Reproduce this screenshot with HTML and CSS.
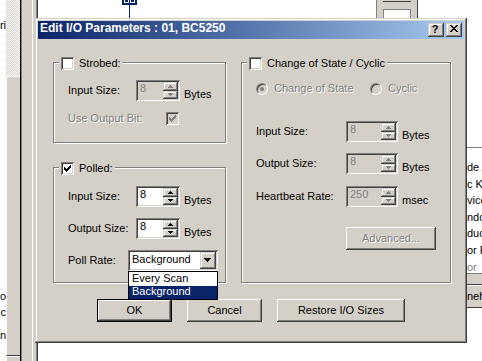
FILE: index.html
```html
<!DOCTYPE html>
<html>
<head>
<meta charset="utf-8">
<title>Edit I/O Parameters</title>
<link rel="stylesheet" href="styles.css">
</head>
<body>
<div class="desktop">
  <div class="left-win">
    <div class="lw-text">
      <div class="lw-line l1">ri</div>
      <div class="lw-line l2">o</div>
      <div class="lw-line l3">c</div>
      <div class="lw-line l4">n</div>
    </div>
    <div class="lw-pane">
      <div class="dither"></div>
      <div class="lw-panel"></div>
      <div class="lw-panel2"></div>
    </div>
    <div class="lw-bar"></div>
  </div>

  <div class="back-win">
    <div class="node"><span></span><span></span></div>
    <div class="link"></div>
    <div class="widget"><div class="w-top"></div><div class="w-box"></div></div>
  </div>

  <div class="right-pane">
    <div class="rp-list">
      <div>de A</div>
      <div>c K</div>
      <div>vice</div>
      <div>ndo</div>
      <div>duc</div>
      <div>or F</div>
      <div class="dim">or</div>
    </div>
    <div class="rp-band"></div>
    <div class="rp-btn">neh</div>
  </div>

  <div class="dialog">
    <div class="titlebar">
      <span class="title">Edit I/O Parameters : 01, BC5250</span>
      <div class="caption-btns">
        <div class="cbtn help">?</div>
        <div class="cbtn close">
          <svg width="8" height="7" viewBox="0 0 8 7" shape-rendering="crispEdges"><path fill="#000" d="M0 0h2v1H0zM6 0h2v1H6zM1 1h2v1H1zM5 1h2v1H5zM2 2h4v1H2zM3 3h2v1H3zM2 4h4v1H2zM1 5h2v1H1zM5 5h2v1H5zM0 6h2v1H0zM6 6h2v1H6z"/></svg>
        </div>
      </div>
    </div>

    <div class="dlg-body">
      <div class="columns">
        <div class="col-left">
          <div class="group g-strobed">
            <div class="legend"><span class="chk"></span><span>Strobed:</span></div>
            <div class="row">
              <span class="lbl w68">Input Size:</span>
              <div class="spin disabled">
                <span class="spin-val">8</span>
                <span class="spin-btns">
                  <span class="sb up"><i class="au"></i></span>
                  <span class="sb dn"><i class="ad"></i></span>
                </span>
              </div>
              <span class="unit">Bytes</span>
            </div>
            <div class="row r-outbit">
              <span class="lbl w98 dis">Use Output Bit:</span>
              <span class="chk disabled">
                <svg width="7" height="7" viewBox="0 0 7 7" shape-rendering="crispEdges"><path fill="currentColor" d="M6 0h1v3H6zM5 1h1v3H5zM4 2h1v3H4zM3 3h1v3H3zM2 4h1v3H2zM1 3h1v3H1zM0 2h1v3H0z"/></svg>
              </span>
            </div>
          </div>

          <div class="group g-polled">
            <div class="legend">
              <span class="chk">
                <svg width="7" height="7" viewBox="0 0 7 7" shape-rendering="crispEdges"><path fill="currentColor" d="M6 0h1v3H6zM5 1h1v3H5zM4 2h1v3H4zM3 3h1v3H3zM2 4h1v3H2zM1 3h1v3H1zM0 2h1v3H0z"/></svg>
              </span>
              <span>Polled:</span>
            </div>
            <div class="row">
              <span class="lbl w68">Input Size:</span>
              <div class="spin">
                <span class="spin-val">8</span>
                <span class="spin-btns">
                  <span class="sb up"><i class="au"></i></span>
                  <span class="sb dn"><i class="ad"></i></span>
                </span>
              </div>
              <span class="unit">Bytes</span>
            </div>
            <div class="row">
              <span class="lbl w68">Output Size:</span>
              <div class="spin">
                <span class="spin-val">8</span>
                <span class="spin-btns">
                  <span class="sb up"><i class="au"></i></span>
                  <span class="sb dn"><i class="ad"></i></span>
                </span>
              </div>
              <span class="unit">Bytes</span>
            </div>
            <div class="row">
              <span class="lbl w60">Poll Rate:</span>
              <div class="combo">
                <span class="combo-val">Background</span>
                <span class="combo-btn"><i class="ad7"></i></span>
                <div class="combo-list">
                  <div class="opt first">Every Scan</div>
                  <div class="opt sel">Background</div>
                </div>
              </div>
            </div>
          </div>
        </div>

        <div class="group g-cos">
          <div class="legend"><span class="chk"></span><span>Change of State / Cyclic</span></div>
          <div class="radio-row">
            <span class="ropt first"><span class="radio on"></span><span class="dis">Change of State</span></span>
            <span class="ropt"><span class="radio"></span><span class="dis">Cyclic</span></span>
          </div>
          <div class="row cos-first">
            <span class="lbl w90">Input Size:</span>
            <div class="spin wide disabled">
              <span class="spin-val">8</span>
              <span class="spin-btns">
                <span class="sb up"><i class="au"></i></span>
                <span class="sb dn"><i class="ad"></i></span>
              </span>
            </div>
            <span class="unit">Bytes</span>
          </div>
          <div class="row">
            <span class="lbl w90">Output Size:</span>
            <div class="spin wide disabled">
              <span class="spin-val">8</span>
              <span class="spin-btns">
                <span class="sb up"><i class="au"></i></span>
                <span class="sb dn"><i class="ad"></i></span>
              </span>
            </div>
            <span class="unit">Bytes</span>
          </div>
          <div class="row cos-hb">
            <span class="lbl w90">Heartbeat Rate:</span>
            <div class="spin wide disabled">
              <span class="spin-val">250</span>
              <span class="spin-btns">
                <span class="sb up"><i class="au"></i></span>
                <span class="sb dn"><i class="ad"></i></span>
              </span>
            </div>
            <span class="unit">msec</span>
          </div>
          <div class="btn btn-adv"><span class="dis">Advanced...</span></div>
        </div>
      </div>

      <div class="buttons">
        <div class="btn default b75">OK</div>
        <div class="btn b75">Cancel</div>
        <div class="btn b128">Restore I/O Sizes</div>
      </div>
    </div>
  </div>
</div>
</body>
</html>
```

FILE: styles.css
```css
* { box-sizing: border-box; margin: 0; padding: 0; }
html, body { width: 482px; height: 361px; overflow: hidden; background: #fff; }
body {
  font-family: "Liberation Sans", Arial, sans-serif;
  font-size: 11px;
  line-height: 13px;
  color: #000;
}

.desktop { position: relative; width: 482px; height: 361px; overflow: hidden; background: #fff; }

/* ---------- left background window ---------- */
.left-win { position: absolute; left: 0; top: 0; width: 36px; height: 361px; display: flex; }
.lw-text { width: 6px; background: #fff; display: flex; flex-direction: column; align-items: flex-end; overflow: hidden; }
.lw-line { white-space: nowrap; line-height: 13px; }
.l1 { margin-top: 19px; }
.l2 { margin-top: 258px; }
.l3 { margin-top: 3px; }
.l4 { margin-top: 10px; }
.lw-pane { width: 14px; display: flex; flex-direction: column; }
.dither { height: 76px; background: repeating-conic-gradient(#d4d0c8 0 25%, #fff 0 50%) 0 0 / 2px 2px; }
.lw-panel { height: 280px; background: #d4d0c8; border-top: 1px solid #fff; border-left: 1px solid #fff; border-bottom: 1px solid #404040; }
.lw-panel2 { flex: 1; background: #d4d0c8; border-top: 1px solid #fff; border-left: 1px solid #fff; }
.lw-bar { width: 16px; background: linear-gradient(to right, #000 0 1px, #808080 1px 2px, #d4d0c8 2px 12px, #fff 12px 13px, #d4d0c8 13px 16px); }

/* ---------- back window (canvas) ---------- */
.back-win { position: absolute; left: 36px; top: 0; right: 0; bottom: 0; background: #fff; box-shadow: inset 1px 0 #808080, inset 2px 0 #404040; }
.node { position: absolute; left: 86px; top: 0; width: 15px; height: 5px; background: #0a246a; display: flex; gap: 1px; padding-left: 2px; }
.node span { width: 5px; height: 3px; border: 1px solid #fff; border-top: none; }
.link { position: absolute; left: 93px; top: 5px; width: 1px; height: 13px; background: #0a246a; }
.widget { position: absolute; left: 340px; top: 0; width: 42px; height: 18px; background: #d4d0c8; border-left: 1px solid #808080; border-right: 1px solid #404040; }
.w-top { margin: 0 6px; height: 2px; border-bottom: 1px solid #404040; }
.w-box { margin: 7px 6px 0; height: 9px; background: #fff; border: 1px solid #808080; border-bottom: none; }

/* ---------- right background pane ---------- */
.right-pane { position: absolute; left: 467px; top: 147px; width: 15px; overflow: hidden; }
.rp-list { height: 126px; border-top: 1px solid #808080; padding-top: 11px; line-height: 16.6px; white-space: nowrap; background: #fff; }
.rp-list .dim { color: #808080; }
.rp-band { height: 12px; background: #d4d0c8; border-top: 1px solid #808080; border-bottom: 1px solid #404040; }
.rp-btn { height: 23px; background: #d4d0c8; border-top: 1px solid #fff; border-bottom: 1px solid #404040; line-height: 21px; white-space: nowrap; }

/* ---------- dialog ---------- */
.dialog {
  position: absolute; left: 35px; top: 18px; width: 432px; height: 325px;
  padding: 3px; background: #d4d0c8;
  box-shadow: inset -1px -1px #404040, inset 1px 1px #d4d0c8, inset -2px -2px #808080, inset 2px 2px #fff;
}
.titlebar { height: 18px; display: flex; align-items: flex-start; background: linear-gradient(to right, #0a246a, #a6caf0); }
.title { flex: 1; padding-left: 2px; color: #fff; font-weight: bold; font-size: 12px; line-height: 14px; white-space: nowrap; }
.caption-btns { display: flex; gap: 2px; margin: 2px 2px 0 0; }
.cbtn {
  width: 16px; height: 14px; background: #d4d0c8;
  box-shadow: inset -1px -1px #404040, inset 1px 1px #d4d0c8, inset -2px -2px #808080, inset 2px 2px #fff;
  display: flex; justify-content: center; align-items: flex-start;
}
.cbtn.help { font-weight: bold; font-size: 11px; line-height: 11px; padding-top: 1px; padding-right: 2px; }
.cbtn.close { padding-top: 2px; }
.cbtn svg { display: block; }

.dlg-body { padding-left: 15px; }
.columns { display: flex; gap: 15px; margin-top: 23px; }
.col-left { display: flex; flex-direction: column; gap: 24px; width: 173px; }

.group { position: relative; border: 1px solid #808080; box-shadow: inset 1px 1px #fff, 1px 1px #fff; }
.g-strobed { height: 81px; padding: 17px 0 0 14px; }
.g-polled { height: 116px; padding: 18px 0 0 14px; }
.g-cos { width: 210px; height: 221px; padding: 19px 0 0 14px; }
.legend {
  position: absolute; left: 5px; top: -6px; height: 13px;
  display: flex; align-items: center; gap: 5px; padding: 0 2px;
  background: #d4d0c8; white-space: nowrap;
}

.row { display: flex; align-items: center; height: 21px; }
.row + .row { margin-top: 11px; }
.r-outbit { margin-top: 7px; }
.row.r-outbit { margin-top: 7px; }
.cos-first { margin-top: 26px; }
.row.cos-hb { margin-top: 12px; }
.lbl { flex: none; white-space: nowrap; }
.w60 { width: 60px; }
.w68 { width: 68px; }
.w90 { width: 90px; }
.w98 { width: 98px; }
.unit { align-self: flex-end; margin-left: 4px; white-space: nowrap; }
.dis { color: #808080; text-shadow: 1px 1px 0 #fff; }

/* checkbox */
.chk {
  flex: none; width: 13px; height: 13px; background: #fff; color: #000;
  box-shadow: inset 1px 1px #808080, inset -1px -1px #fff, inset 2px 2px #404040, inset -2px -2px #d4d0c8;
  display: flex; align-items: center; justify-content: center;
}
.chk.disabled { background: #d4d0c8; color: #808080; }
.chk svg { display: block; }

/* radio */
.radio-row { display: flex; align-items: center; height: 13px; }
.ropt { display: flex; align-items: center; gap: 6px; white-space: nowrap; }
.ropt.first { width: 114px; }
.radio {
  flex: none; width: 12px; height: 12px; border-radius: 50%; background: #d4d0c8;
  border: 1px solid; border-color: #808080 #fff #fff #808080;
  box-shadow: inset 1px 1px #404040, inset -1px -1px #d4d0c8;
  display: flex; align-items: center; justify-content: center;
}
.radio.on::after { content: ""; width: 4px; height: 4px; border-radius: 50%; background: #808080; }

/* spin edit */
.spin {
  flex: none; display: flex; width: 44px; height: 21px; padding: 2px; background: #fff;
  box-shadow: inset 1px 1px #808080, inset -1px -1px #fff, inset 2px 2px #404040, inset -2px -2px #d4d0c8;
}
.spin.wide { width: 52px; }
.spin.disabled { background: #d4d0c8; color: #808080; }
.spin-val { flex: 1; padding-left: 2px; line-height: 13px; }
.spin-btns { width: 15px; display: flex; flex-direction: column; }
.sb {
  display: flex; justify-content: center; align-items: flex-start;
  background: #d4d0c8; color: #000;
  box-shadow: inset -1px -1px #404040, inset 1px 1px #d4d0c8, inset -2px -2px #808080, inset 2px 2px #fff;
}
.spin.disabled .sb { color: #808080; }
.sb.up { height: 9px; padding-top: 3px; }
.sb.dn { height: 8px; padding-top: 2px; }
.au, .ad, .ad7 { display: block; width: 1px; height: 1px; background: currentColor; }
.au { box-shadow: -1px 1px, 0 1px, 1px 1px, -2px 2px, -1px 2px, 0 2px, 1px 2px, 2px 2px; }
.ad { box-shadow: -2px 0, -1px 0, 1px 0, 2px 0, -1px 1px, 0 1px, 1px 1px, 0 2px; }
.ad7 { box-shadow: -3px 0, -2px 0, -1px 0, 1px 0, 2px 0, 3px 0, -2px 1px, -1px 1px, 0 1px, 1px 1px, 2px 1px, -1px 2px, 0 2px, 1px 2px, 0 3px; }

/* combo */
.combo {
  position: relative; flex: none; display: flex; width: 90px; height: 21px; padding: 2px; background: #fff;
  box-shadow: inset 1px 1px #808080, inset -1px -1px #fff, inset 2px 2px #404040, inset -2px -2px #d4d0c8;
}
.combo-val { flex: 1; padding-left: 2px; line-height: 15px; white-space: nowrap; }
.combo-btn {
  width: 16px; height: 17px; display: flex; align-items: flex-start; padding: 6px 0 0 7px;
  background: #d4d0c8; color: #000;
  box-shadow: inset -1px -1px #404040, inset 1px 1px #d4d0c8, inset -2px -2px #808080, inset 2px 2px #fff;
}
.combo-list { position: absolute; left: 0; top: 21px; width: 90px; border: 1px solid #000; background: #fff; }
.opt { height: 13px; line-height: 11px; padding-left: 3px; white-space: nowrap; }
.opt.first { height: 14px; line-height: 12px; }
.opt.sel { background: #0a246a; color: #fff; }

/* buttons */
.btn {
  height: 23px; background: #d4d0c8; white-space: nowrap;
  box-shadow: inset -1px -1px #404040, inset 1px 1px #fff, inset -2px -2px #808080, inset 2px 2px #d4d0c8;
  display: flex; align-items: center; justify-content: center; line-height: 13px;
}
.btn.default { box-shadow: inset 0 0 0 1px #000, inset -2px -2px #404040, inset 2px 2px #fff, inset -3px -3px #808080; }
.btn-adv { width: 90px; margin: 20px 0 0 90px; }
.buttons { display: flex; gap: 15px; margin: 16px 0 0 44px; }
.b75 { width: 75px; }
.b128 { width: 128px; }
```
